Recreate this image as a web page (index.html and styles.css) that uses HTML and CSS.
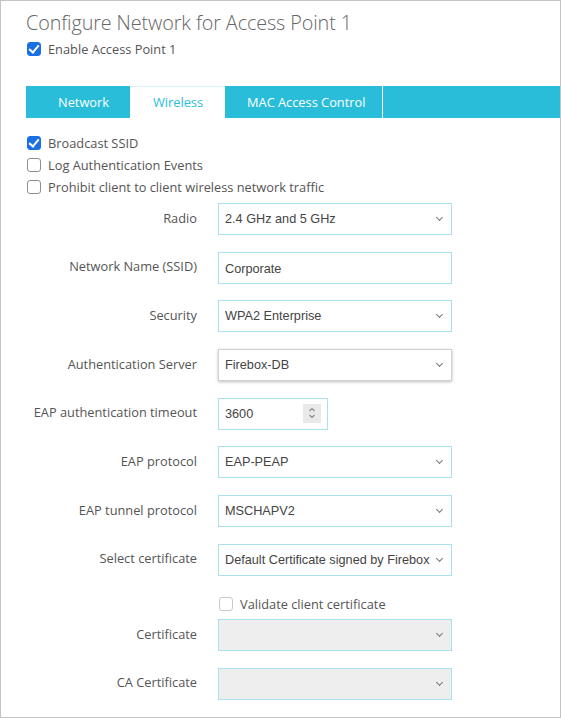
FILE: index.html
```html
<!DOCTYPE HTML>
<html>
<head>
<meta http-equiv="Content-Type" content="text/html; charset=utf-8">
<title>Configure Network for Access Point 1</title>
<link rel="stylesheet" href="styles.css">
</head>
<body>
<div class="page">
  <h1 class="title">Configure Network for Access Point 1</h1>
  <label class="check top"><span class="box on"></span>Enable Access Point 1</label>

  <ul class="tabs">
    <li class="tab first">Network</li>
    <li class="tab active">Wireless</li>
    <li class="tab last">MAC Access Control</li>
  </ul>

  <div class="checks">
    <label class="check"><span class="box on"></span>Broadcast SSID</label>
    <label class="check"><span class="box"></span>Log Authentication Events</label>
    <label class="check"><span class="box"></span>Prohibit client to client wireless network traffic</label>
  </div>

  <div class="form">
    <div class="row">
      <span class="lbl">Radio</span>
      <div class="field sel">2.4 GHz and 5 GHz<span class="chev"></span></div>
    </div>
    <div class="row">
      <span class="lbl">Network Name (SSID)</span>
      <div class="field txt">Corporate</div>
    </div>
    <div class="row">
      <span class="lbl">Security</span>
      <div class="field sel">WPA2 Enterprise<span class="chev"></span></div>
    </div>
    <div class="row">
      <span class="lbl">Authentication Server</span>
      <div class="field sel shade">Firebox-DB<span class="chev"></span></div>
    </div>
    <div class="row">
      <span class="lbl">EAP authentication timeout</span>
      <div class="field num">3600<span class="spin"><svg width="10" height="14" viewBox="0 0 10 14"><path d="M2.5 5 L5 2.5 L7.5 5 M2.5 9 L5 11.5 L7.5 9" fill="none" stroke="#888" stroke-width="1.1"/></svg></span></div>
    </div>
    <div class="row">
      <span class="lbl">EAP protocol</span>
      <div class="field sel">EAP-PEAP<span class="chev"></span></div>
    </div>
    <div class="row">
      <span class="lbl">EAP tunnel protocol</span>
      <div class="field sel">MSCHAPV2<span class="chev"></span></div>
    </div>
    <div class="row">
      <span class="lbl">Select certificate</span>
      <div class="field sel">Default Certificate signed by Firebox<span class="chev"></span></div>
    </div>
    <div class="row short">
      <span class="lbl"></span>
      <label class="check dim"><span class="box"></span>Validate client certificate</label>
    </div>
    <div class="row">
      <span class="lbl">Certificate</span>
      <div class="field sel off"><span class="chev"></span></div>
    </div>
    <div class="row">
      <span class="lbl">CA Certificate</span>
      <div class="field sel off"><span class="chev"></span></div>
    </div>
  </div>
</div>
</body>
</html>
```

FILE: styles.css
```css
body {margin:0; font-family:"Open Sans","Noto Sans",sans-serif; font-size:12.8px; color:#555;}
.page {width:561px; height:718px; box-sizing:border-box; border:1px solid #c4c4c4; padding:9px 0 0 25px; overflow:hidden;}

.title {margin:0; font-size:19.8px; font-weight:300; line-height:26px; color:#666; letter-spacing:-0.1px;}

.check {display:flex; align-items:center; height:22px; white-space:nowrap;}
.check.top {margin-top:4px; height:18px;}
.box {width:12px; height:12px; border:1px solid #8f8f8f; border-radius:3px; background:#fff; margin:0 7px 0 1px; flex:none; position:relative;}
.box.on {background:#1a6fe5; border-color:#1a6fe5;}
.box.on:after {content:""; position:absolute; left:3px; top:0px; width:4px; height:8px; border:solid #fff; border-width:0 2px 2px 0; transform:rotate(40deg);}
.check.dim .box {border-color:#c8c8c8;}

.tabs {list-style:none; margin:28px 0 0 0; padding:0; height:32px; background:#29bdd9; display:flex;}
.tab {line-height:32px; color:#fff; padding:0 21px 0 22px; border-right:1px solid #fff;}
.tab.first {padding-left:32px;}
.tab.last {padding-right:17px;}
.tab.active {background:#fff; color:#29bdd9; border-top:1px solid #d7f1f7; line-height:31px;}

.checks {margin-top:14px;}

.form {margin-top:5px; display:flex; flex-direction:column; gap:16.7px;}
.row {display:flex; align-items:center; height:32px;}
.row.short {height:22px; margin-top:0; margin-bottom:-12px;}
.lbl {width:171px; text-align:right; margin-right:21px; flex:none; padding-bottom:3px;}
.field {box-sizing:border-box; height:32px; width:234px; border:1px solid #a9e2ee; padding:0 0 0 6px; display:flex; align-items:center; font-family:"Liberation Sans",Arial,sans-serif; font-size:12.7px; color:#444; position:relative; background:#fff; white-space:nowrap;}
.field.txt {padding-top:2px;}
.field.shade {border-color:#d0d0d0; box-shadow:0 1px 3px rgba(0,0,0,0.25);}
.field.off {background:#eeeeee;}
.field.num {width:110px;}
.chev {position:absolute; right:9px; top:11px; width:4px; height:4px; border:solid #777; border-width:0 1px 1px 0; transform:rotate(45deg);}
.spin {position:absolute; left:84px; top:5px; width:18px; height:19px; background:#e9e9e9; display:flex; align-items:center; justify-content:center;}
```
